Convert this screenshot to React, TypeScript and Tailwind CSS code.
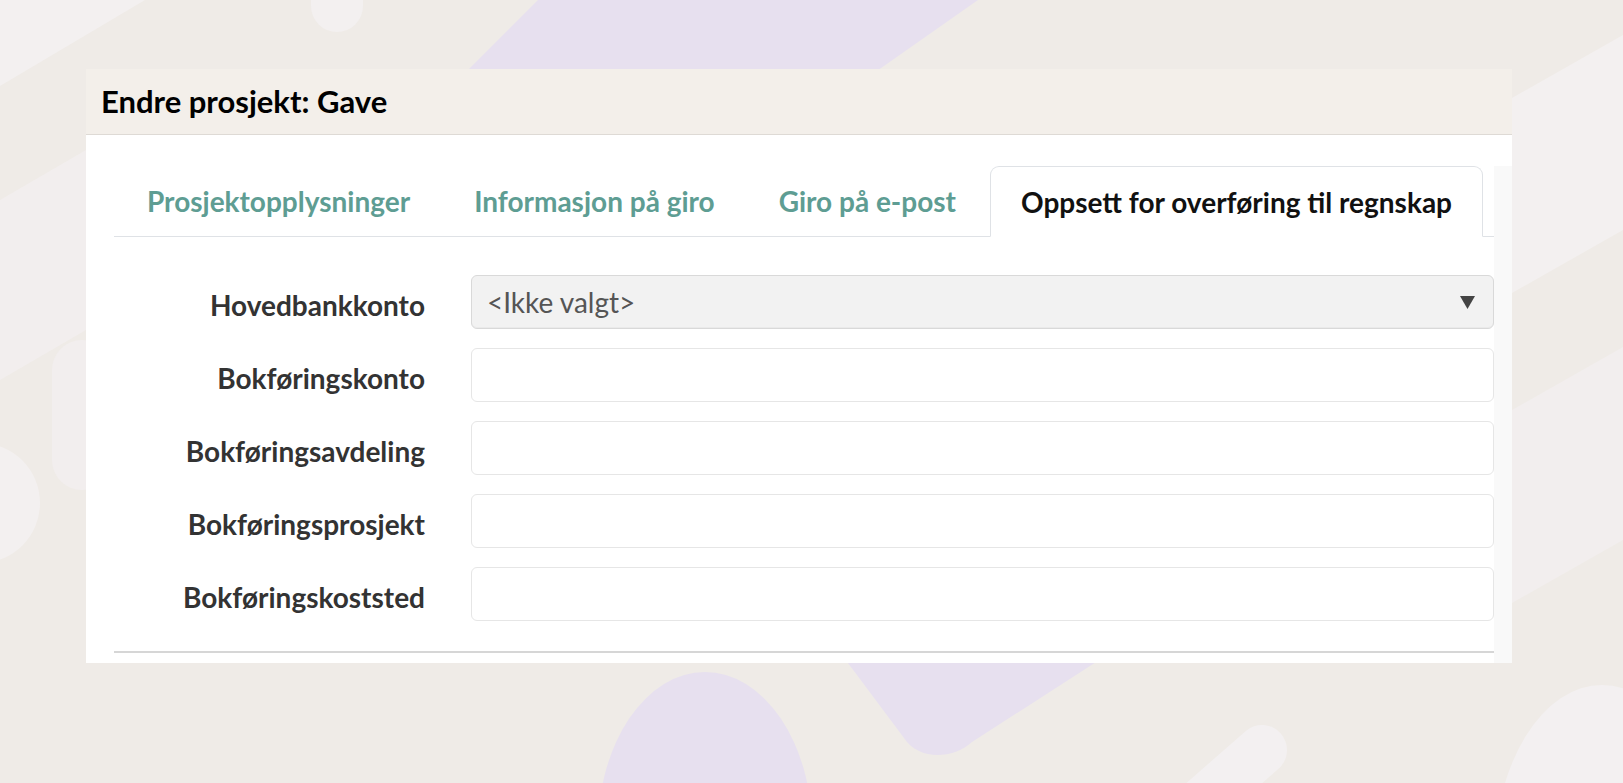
import React from 'react';

const tabs = [
  { label: 'Prosjektopplysninger', active: false },
  { label: 'Informasjon på giro', active: false },
  { label: 'Giro på e-post', active: false },
  { label: 'Oppsett for overføring til regnskap', active: true },
];

const fields = [
  'Bokføringskonto',
  'Bokføringsavdeling',
  'Bokføringsprosjekt',
  'Bokføringskoststed',
];

function Backdrop() {
  return (
    <svg
      className="absolute inset-0 h-full w-full"
      viewBox="0 0 1623 783"
      preserveAspectRatio="none"
      aria-hidden
    >
      {/* lighter shapes */}
      <polygon points="0,0 145,0 0,86" fill="#f3f0f0" />
      <rect x="311" y="-40" width="52" height="72" rx="26" fill="#f3f0f0" />
      <polygon points="0,200 86,150 86,330 0,380" fill="#f2eeee" />
      <rect x="52" y="340" width="60" height="150" rx="30" fill="#f2eeee" />
      <circle cx="-20" cy="503" r="60" fill="#f3f0f0" />
      <polygon points="1512,98 1623,35 1623,230 1512,293" fill="#f3f0f0" />
      <polygon points="1512,410 1623,347 1623,540 1512,603" fill="#f2eeee" />
      <ellipse cx="1602" cy="860" rx="108" ry="175" fill="#f3f0f1" />
      <line
        x1="1262"
        y1="750"
        x2="1165"
        y2="835"
        stroke="#f3f0f1"
        strokeWidth="50"
        strokeLinecap="round"
      />
      {/* lavender shapes */}
      <polygon points="538,0 978,0 864,80 458,80" fill="#e7e0ef" />
      <path
        d="M842 655 L1107 655 L972 742 C952 760 918 760 904 738 Z"
        fill="#e7e0ef"
      />
      <ellipse cx="705" cy="830" rx="107" ry="158" fill="#e7e0ef" />
    </svg>
  );
}

function Caret() {
  return (
    <svg width="15" height="13" viewBox="0 0 15 13" aria-hidden>
      <polygon points="0,0 15,0 7.5,13" fill="#444" />
    </svg>
  );
}

export default function App() {
  return (
    <div className="relative h-[783px] w-full overflow-hidden bg-[#efebe7] font-['Lato','Open_Sans',sans-serif]">
      <Backdrop />

      <div className="relative pl-[86px] pt-[69px]">
        <div className="w-[1426px] bg-white">
          {/* Header */}
          <div className="flex h-[66px] items-center border-b border-[#dedad5] bg-[#f3efea] px-[15px]">
            <h2 className="text-[31px] font-bold text-black">
              Endre prosjekt: Gave
            </h2>
          </div>

          <div className="flex">
            <div className="w-[1408px] pl-[28px] pt-[31px] pb-[10px]">
              {/* Tabs */}
              <div className="flex border-b border-[#dfe2e6] pl-[3px]">
                {tabs.map((tab) => (
                  <div
                    key={tab.label}
                    className={
                      tab.active
                        ? '-mb-px mr-[3px] flex h-[71px] shrink-0 items-center whitespace-nowrap rounded-t-[9px] border border-[#dfe2e6] border-b-white bg-white px-[30px] text-[28px] font-bold text-[#111]'
                        : 'mr-[4px] flex h-[70px] shrink-0 items-center whitespace-nowrap px-[30px] text-[28px] font-bold text-[#5e9d93]'
                    }
                  >
                    {tab.label}
                  </div>
                ))}
              </div>

              {/* Form */}
              <div className="mt-[38px] flex flex-col gap-[19px]">
                <div className="flex items-center">
                  <label className="w-[311px] pt-[6px] text-right text-[28px] font-bold text-[#333]">
                    Hovedbankkonto
                  </label>
                  <div className="ml-[46px] flex h-[54px] flex-1 items-center justify-between rounded-[6px] border border-[#d9d9d9] bg-[#f2f2f2] pl-[15px] pr-[18px] shadow-[inset_0_-1px_0_rgba(0,0,0,0.03)]">
                    <span className="text-[28px] text-[#555]">&lt;Ikke valgt&gt;</span>
                    <Caret />
                  </div>
                </div>

                {fields.map((f) => (
                  <div key={f} className="flex items-center">
                    <label className="w-[311px] pt-[6px] text-right text-[28px] font-bold text-[#333]">
                      {f}
                    </label>
                    <input
                      type="text"
                      className="ml-[46px] h-[54px] flex-1 rounded-[6px] border border-[#e6e6e6] bg-white px-[18px] text-[28px] outline-none"
                    />
                  </div>
                ))}
              </div>

              <div className="mt-[30px] h-[2px] bg-[#d6d6d6]" />
            </div>
            <div className="mt-[31px] w-[18px] bg-[#f9f9f9]" />
          </div>
        </div>
      </div>
    </div>
  );
}
